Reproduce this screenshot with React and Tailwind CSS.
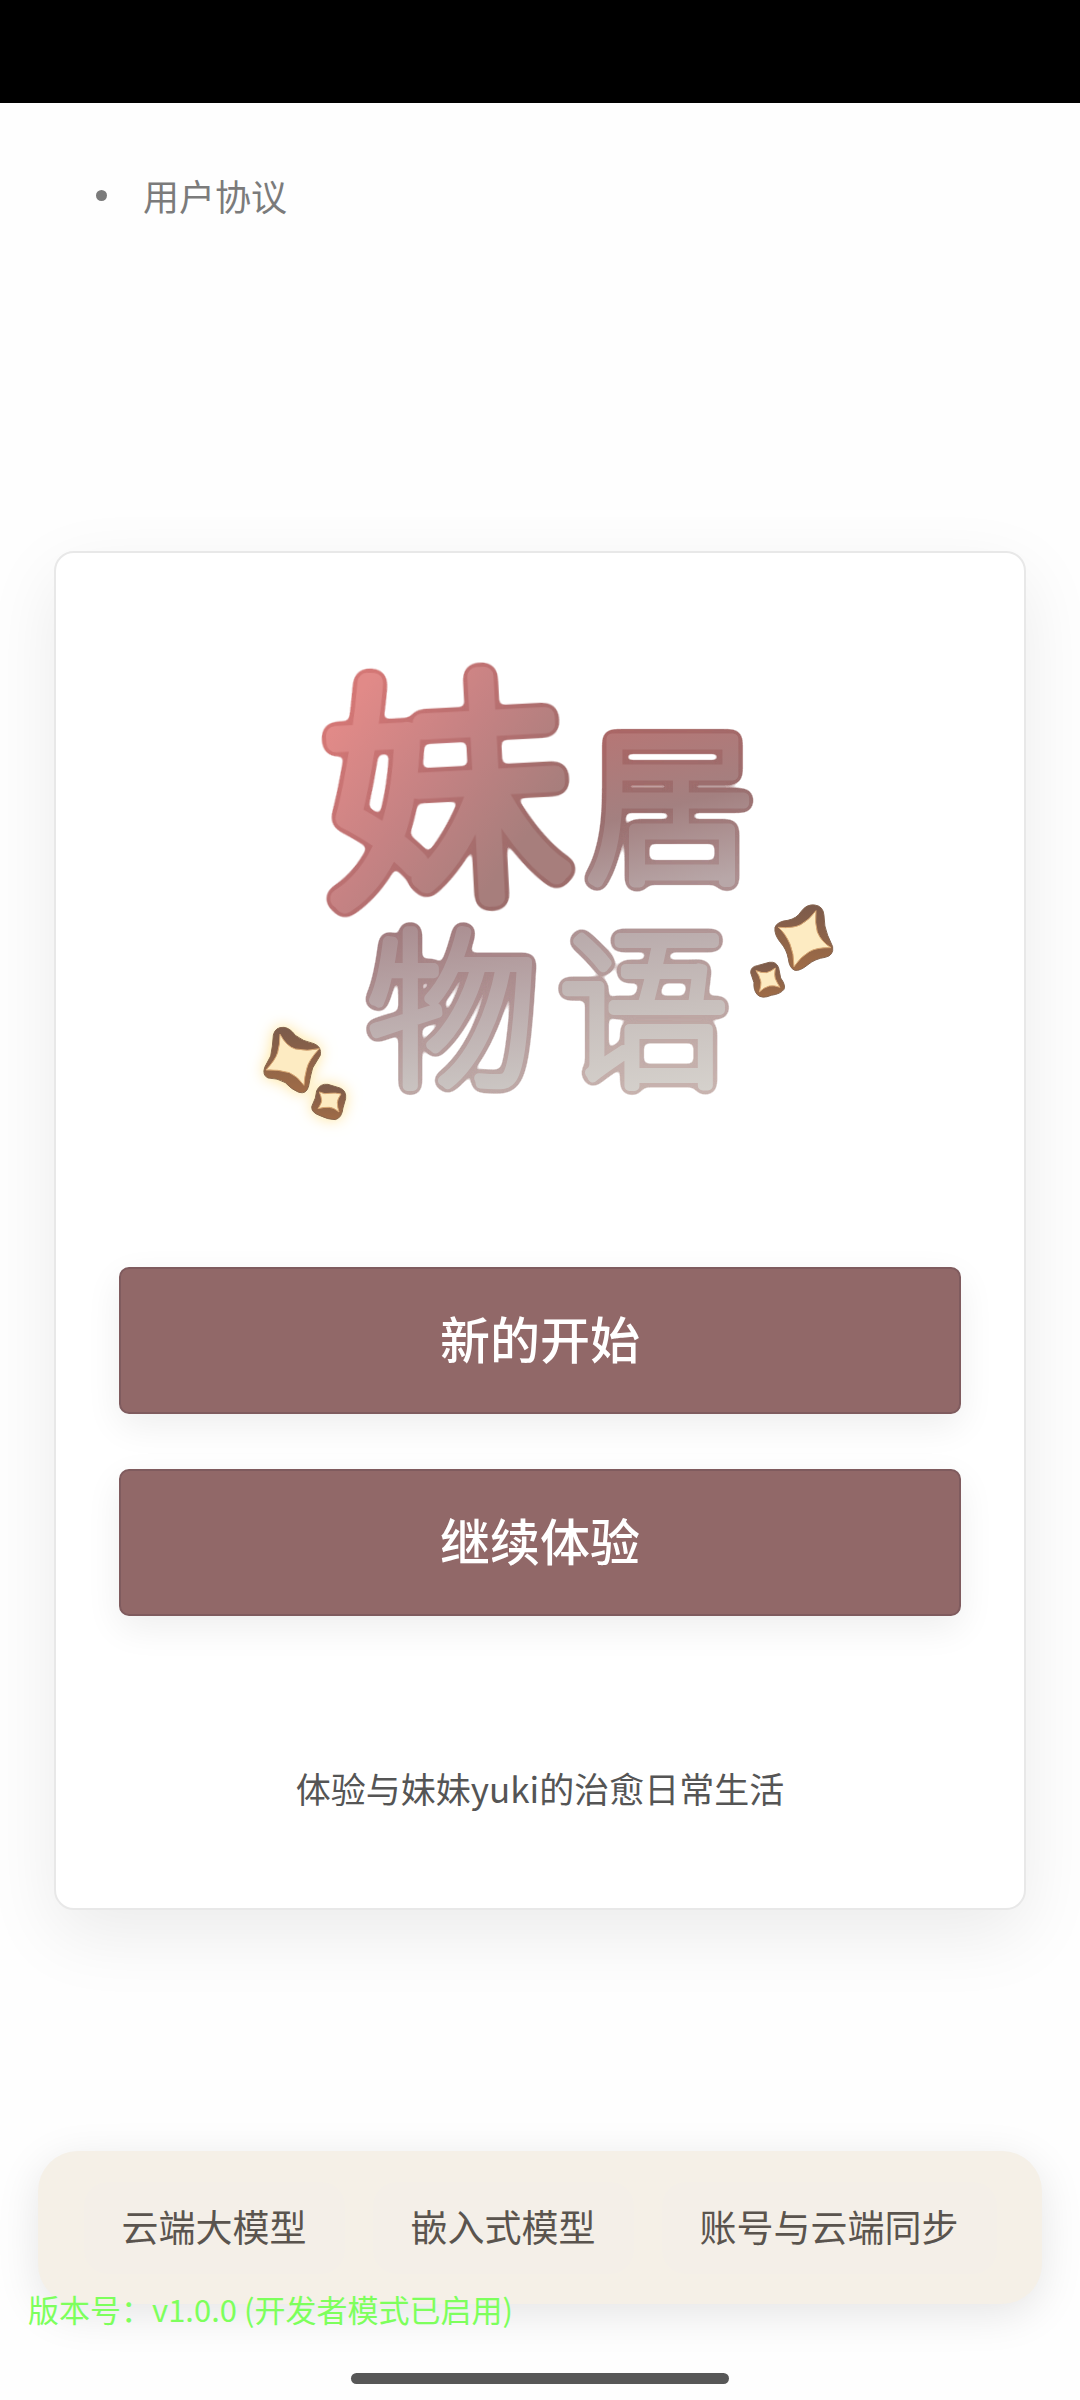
const MENU = [
  { id: 'cloud', label: '云端大模型' },
  { id: 'embedded', label: '嵌入式模型' },
  { id: 'account', label: '账号与云端同步' },
];

const GLYPHS = [
  { char: '妹', x: 323, y: 882, size: 245, stroke: 19, rotate: 'rotate(-3 448 789)', id: 'mei' },
  { char: '居', x: 586, y: 870, size: 169, stroke: 11, id: 'ju' },
  { char: '物', x: 367, y: 1073, size: 171, stroke: 10, id: 'wu' },
  { char: '语', x: 558, y: 1073, size: 171, stroke: 10, id: 'yu' },
];

export default function App() {
  return (
    <div className="min-h-screen flex flex-col bg-[#fefefe] text-[#555555] font-['Noto_Sans_CJK_SC',sans-serif]">
      {/* Barra de estado */}
      <div className="h-[103px] bg-black" />

      <ul className="pt-16 px-24">
        <li className="flex items-center gap-9 text-[#7b7b7b]">
          <span className="w-[11px] h-[11px] rounded-full bg-[#7b7b7b]" />
          <a href="#agreement" className="text-[36px] leading-[56px]">用户协议</a>
        </li>
      </ul>

      <main className="mt-[328px] mx-[54px] px-[63px] pt-[87px] pb-[92px] flex flex-col items-center bg-white border-2 border-[#e8e8e8] rounded-[20px] shadow-[0_24px_72px_rgba(0,0,0,0.08)]">
        <Logo />

        <div className="w-full mt-[127px] flex flex-col gap-[55px]">
          <MainButton>新的开始</MainButton>
          <MainButton>继续体验</MainButton>
        </div>

        <p className="mt-36 text-[35px] leading-[56px]">体验与妹妹yuki的治愈日常生活</p>
      </main>

      <footer className="mt-auto relative">
        <nav className="mx-[38px] h-[153px] flex items-center justify-center gap-7 bg-[#f5f0e7] rounded-[40px] shadow-[0_10px_44px_rgba(0,0,0,0.1)]">
          {MENU.map(({ id, label }) => (
            <button key={id} className="px-[38px] pt-4 pb-5 rounded-3xl bg-[#f4efe8] text-[37px] leading-[56px] whitespace-nowrap text-[#5a544e]">
              {label}
            </button>
          ))}
        </nav>
        <p className="absolute left-7 top-[134px] text-[31px] leading-[48px] text-[#7dff5c]">
          版本号：v1.0.0 (开发者模式已启用)
        </p>
        <div className="w-[378px] h-[11px] mx-auto mt-[69px] mb-4 rounded-full bg-[#575757]" />
      </footer>
    </div>
  );
}

function MainButton({ children }) {
  return (
    <button className="w-full h-[147px] pb-2 rounded-[10px] border-2 border-[#7f5b5e] bg-[#916868] text-white text-[50px] leading-[72px] font-medium shadow-[0_12px_36px_rgba(0,0,0,0.07)]">
      {children}
    </button>
  );
}

function Logo() {
  return (
    <svg className="w-full max-w-[620px] overflow-visible" viewBox="230 640 620 500" role="img" aria-label="妹居物语">
      <defs>
        <Fade id="mei" from={[330, 730]} to={[500, 870]} colors={['#e18a88', '#c58283', '#a77e7c']} />
        <Fade id="ju" from={[640, 728]} to={[680, 890]} colors={['#b57776', '#a38080', '#b8a7a8']} />
        <Fade id="wu" from={[440, 921]} to={[460, 1095]} colors={['#aa8d90', '#bbabac', '#cbc6c3']} />
        <Fade id="yu" from={[640, 926]} to={[660, 1095]} colors={['#b9aaab', '#c8c0bd', '#d5d1cc']} />
        <linearGradient id="bread" x1="0" y1="0" x2="0" y2="1">
          <stop offset="0" stopColor="#7b5a4b" />
          <stop offset="1" stopColor="#a06c46" />
        </linearGradient>
        {/* Borde redondeado: difumina, recorta el alfa y oscurece */}
        <filter id="rim" x="-20%" y="-20%" width="140%" height="140%" colorInterpolationFilters="sRGB">
          <feGaussianBlur in="SourceGraphic" stdDeviation="4.5" />
          <feColorMatrix values=".94 0 0 0 0  0 .86 0 0 0  0 0 .86 0 0  0 0 0 14 -1.6" />
          <feMerge>
            <feMergeNode />
            <feMergeNode in="SourceGraphic" />
          </feMerge>
        </filter>
        <filter id="glow" x="-50%" y="-50%" width="200%" height="200%">
          <feDropShadow dx="0" dy="0" stdDeviation="22" floodColor="#ffe49a" floodOpacity="1" />
        </filter>
      </defs>

      {GLYPHS.map(({ char, x, y, size, stroke, rotate, id }) => (
        <text key={id} x={x} y={y} transform={rotate} fontSize={size} fontWeight="100"
          fill={`url(#${id})`} stroke={`url(#${id})`} strokeWidth={stroke}
          strokeLinejoin="round" strokeLinecap="round" filter="url(#rim)">
          {char}
        </text>
      ))}

      {/* Estrellas izquierda */}
      <g transform="translate(240 900) scale(.3333)" filter="url(#glow)">
        <Star
          outer="M100 405Q106 380 132 382Q150 384 166 406Q188 424 222 431Q246 440 241 466L218 504Q212 524 206 558Q200 584 176 577Q154 568 136 548Q112 534 84 534Q66 526 74 502L92 468Q98 440 100 405Z"
          inner="M120 403Q140 440 166 447Q202 455 238 446Q206 480 200 506Q193 532 192 556Q172 528 148 518Q114 508 78 510Q106 480 113 458Q120 434 120 403Z"
        />
        <Star
          outer="M230 572Q240 550 264 553L300 564Q320 572 317 596L309 624Q306 654 286 659Q264 659 240 647Q214 638 215 620L226 594Z"
          inner="M238 576Q254 584 270 580Q286 578 303 582Q292 598 292 608Q292 622 297 636Q280 622 268 622Q252 621 234 626Q246 608 245 600Q244 590 238 576Z"
        />
      </g>

      {/* Estrellas derecha */}
      <g transform="translate(560 700) scale(.3333)">
        <Star
          outer="M724 634Q740 612 764 615Q790 618 792 646Q792 680 803 706L818 740Q822 766 796 772Q766 776 744 794Q720 814 704 811Q688 804 685 776Q680 748 662 728Q642 704 645 682Q652 664 684 661Q710 656 724 634Z"
          inner="M768 632Q764 670 772 696Q784 726 813 743Q770 742 748 755Q722 770 702 800Q702 760 690 732Q676 700 655 682Q700 686 722 674Q748 660 768 632Z"
        />
        <Star
          outer="M572 818Q572 800 592 797L628 787Q650 784 656 804L662 834Q678 856 672 868Q662 882 634 886Q606 898 592 884Q580 870 582 848Z"
          inner="M646 804Q642 826 646 836Q652 850 660 862Q642 855 628 858Q612 862 598 876Q605 852 602 842Q598 826 588 812Q606 820 620 818Q634 814 646 804Z"
        />
      </g>
    </svg>
  );
}

function Fade({ id, from, to, colors }) {
  return (
    <linearGradient id={id} x1={from[0]} y1={from[1]} x2={to[0]} y2={to[1]} gradientUnits="userSpaceOnUse">
      {colors.map((c, i) => <stop key={c} offset={i / 2} stopColor={c} />)}
    </linearGradient>
  );
}

function Star({ outer, inner }) {
  return (
    <>
      <path d={outer} fill="url(#bread)" stroke="#86644f" strokeWidth="3" strokeLinejoin="round" />
      <path d={inner} fill="#fdebc2" stroke="#d9a873" strokeWidth="3" strokeLinejoin="round" />
    </>
  );
}
